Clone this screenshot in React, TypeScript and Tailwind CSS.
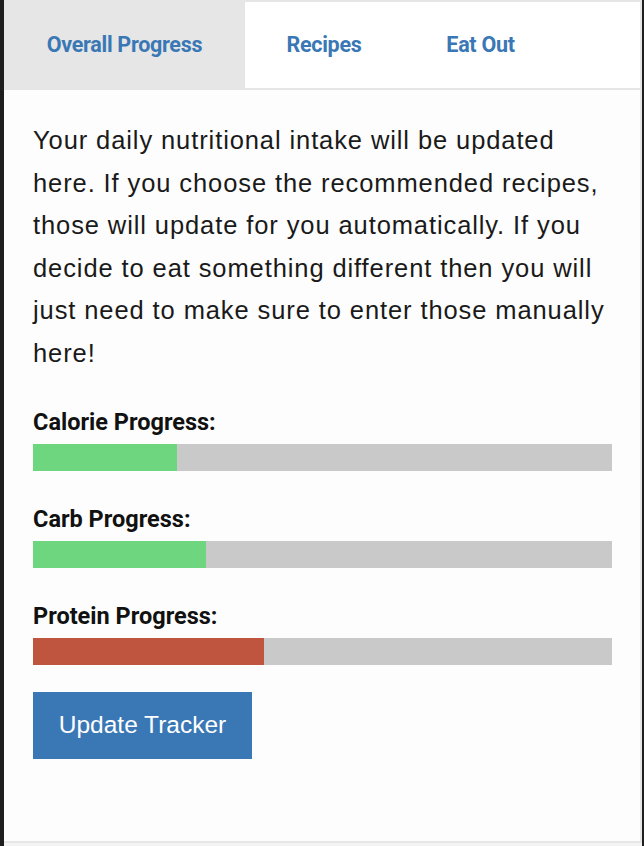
import React from "react";

type Bar = { label: string; pct: number; color: string };

const bars: Bar[] = [
  { label: "Calorie Progress:", pct: 24.9, color: "bg-[#6fd680]" },
  { label: "Carb Progress:", pct: 29.9, color: "bg-[#6fd680]" },
  { label: "Protein Progress:", pct: 39.9, color: "bg-[#c0553f]" },
];

const tabs = [
  { label: "Overall Progress", width: "w-[241px]", active: true },
  { label: "Recipes", width: "w-[158px]", active: false },
  { label: "Eat Out", width: "w-[155px]", active: false },
];

export default function App() {
  return (
    <div className="w-[644px] bg-[#1e1e1e] pl-[4px] pr-[2px]">
      <div className="flex h-[843px] flex-col border-2 border-l-0 border-[#e6e6e6] bg-[#fdfdfd]">
        <div className="flex h-[88px] border-b-2 border-[#e6e6e6] bg-white">
          {tabs.map((t) => (
            <div
              key={t.label}
              className={`flex items-center justify-center font-['Roboto',sans-serif] text-[21.5px] font-bold tracking-[-0.3px] text-[#3a78b5] ${t.width} ${t.active ? "bg-[#e6e6e6]" : ""}`}
            >
              {t.label}
            </div>
          ))}
        </div>

        <div className="flex-1 px-[29px] pt-[29px]">
          <p className="font-['Liberation_Sans',Arial,sans-serif] text-[25.5px] leading-[42.5px] tracking-[0.9px] text-[#1a1a1a]">
            Your daily nutritional intake will be updated here. If you choose the recommended recipes, those will
            update for you automatically. If you decide to eat something different then you will just need to make sure
            to enter those manually here!
          </p>

          <div className="mt-[31px] flex flex-col gap-[31px]">
            {bars.map((b) => (
              <div key={b.label} className="flex flex-col gap-[4px]">
                <div className="font-['Roboto',sans-serif] text-[23.5px] leading-[35px] font-bold text-[#111]">
                  {b.label}
                </div>
                <div className="h-[27px] w-[579px] bg-[#c9c9c9]">
                  <div className={`h-full ${b.color}`} style={{ width: `${b.pct}%` }} />
                </div>
              </div>
            ))}
          </div>

          <button className="mt-[27px] h-[67px] w-[219px] bg-[#3a78b5] font-['Liberation_Sans',Arial,sans-serif] text-[24.5px] text-white">
            Update Tracker
          </button>
        </div>
      </div>
      <div className="h-[3px] bg-[#f3f3f3]" />
    </div>
  );
}
